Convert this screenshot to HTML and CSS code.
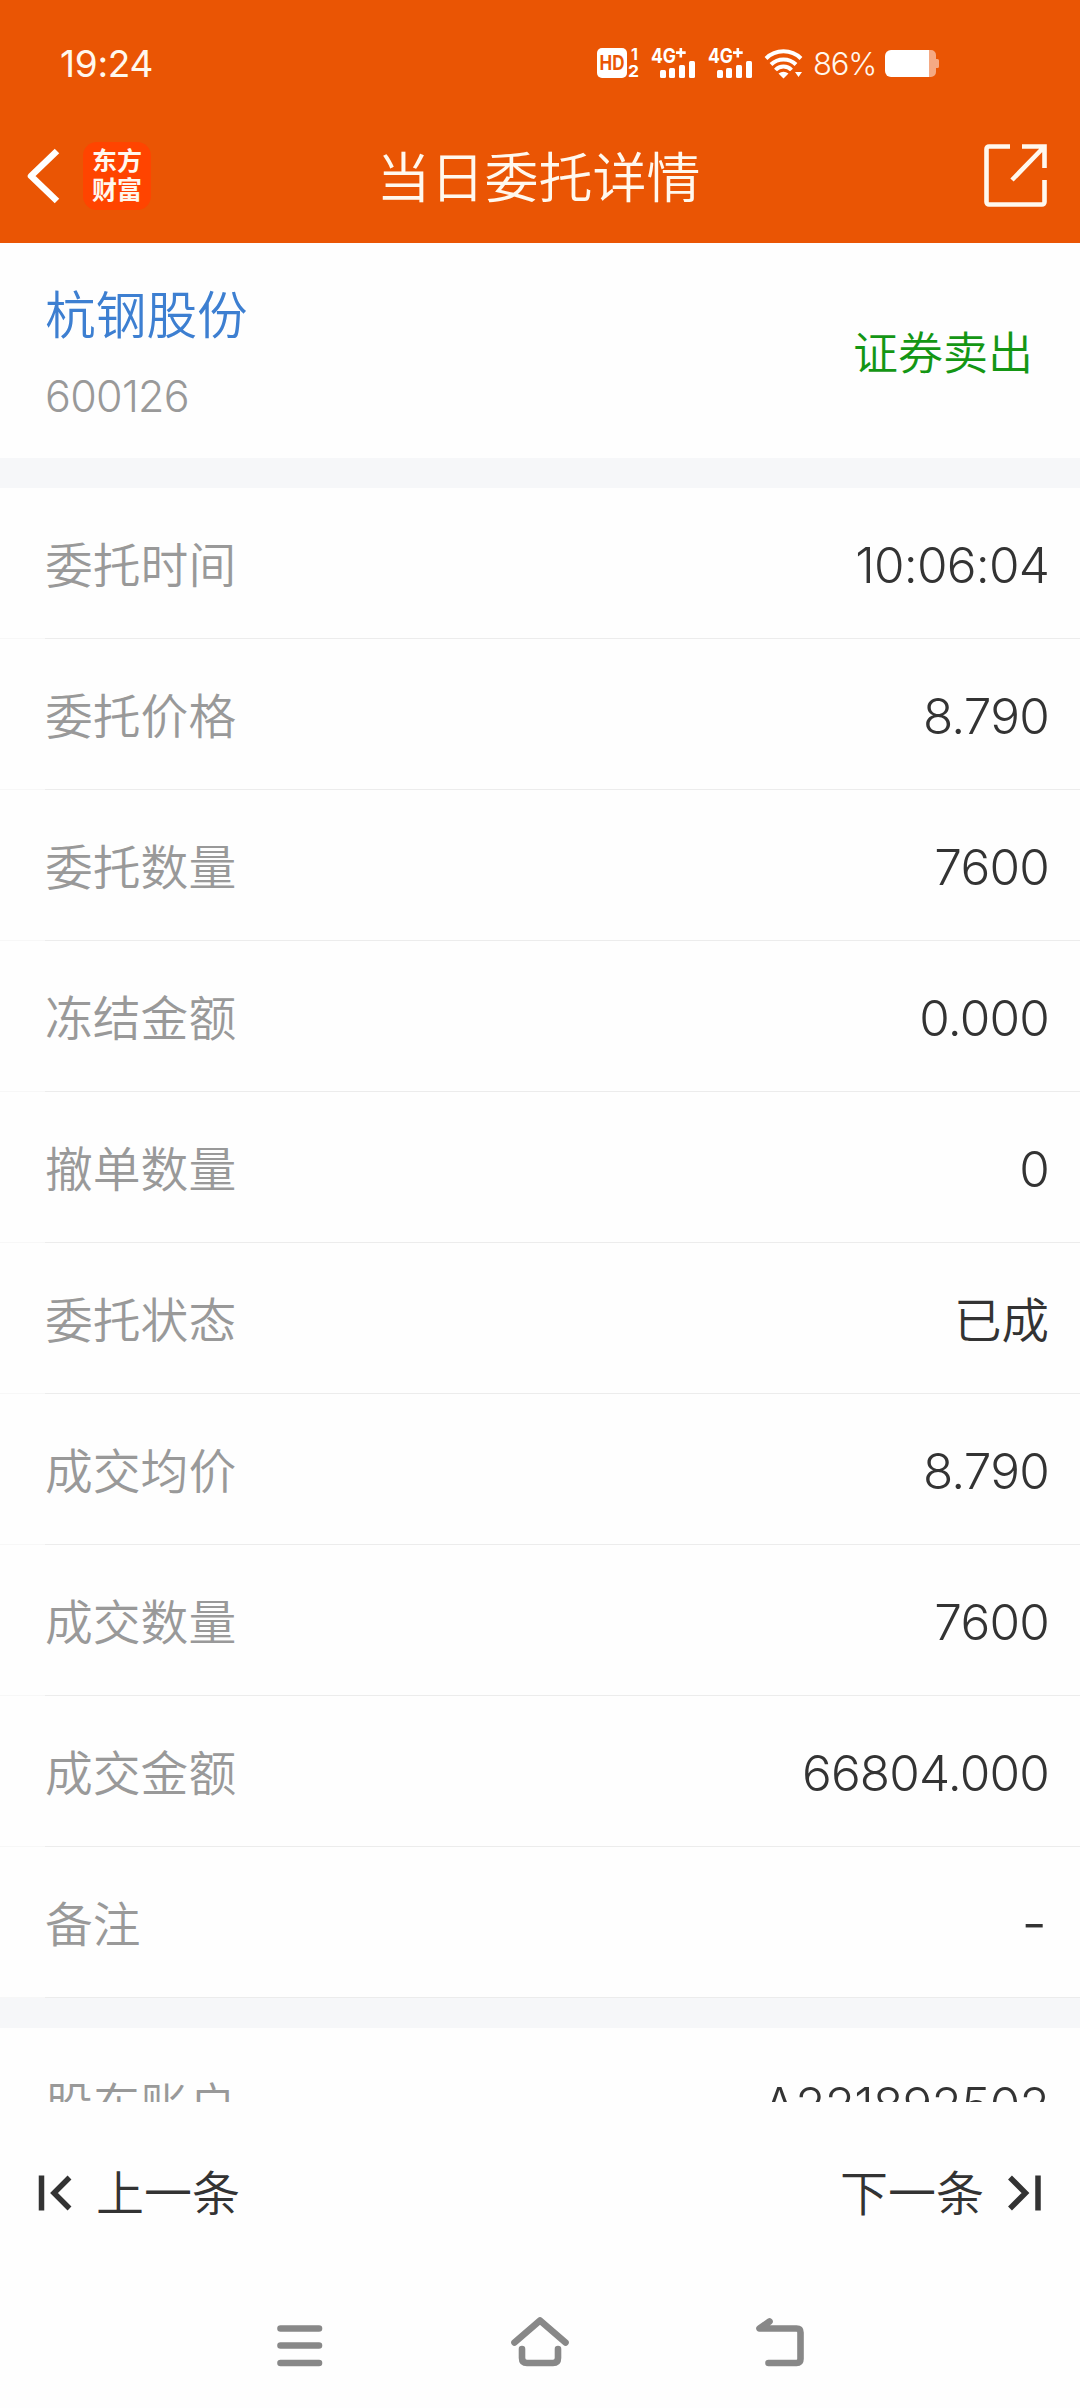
FILE: index.html
```html
<!DOCTYPE html>
<html lang="zh-CN">
<head>
    <meta charset="UTF-8">
    <meta name="viewport" content="width=device-width, initial-scale=1.0">
    <title>当日委托详情</title>
    <link rel="stylesheet" href="styles.css">
</head>
<body>

    <div class="app">
        <!-- Status bar -->
        <div class="status-bar">
            <span class="clock">19:24</span>
            <svg class="signal-icons" width="220" height="40" viewBox="0 0 220 40" fill="#fff">
                <rect x="1" y="5" width="30" height="30" rx="5"/>
                <text x="3.5" y="27" class="hd-text" textLength="25" lengthAdjust="spacingAndGlyphs">HD</text>
                <text x="35" y="17" class="sim-text">1</text>
                <text x="32" y="34" class="sim-text" textLength="11" lengthAdjust="spacingAndGlyphs">2</text>
                <g id="cell">
                    <text x="55" y="19.500" class="net-text" textLength="25" lengthAdjust="spacingAndGlyphs">4G</text>
                    <path d="M80 8.3h3.5V5h2.6v3.3h3.6v2.6h-3.6v3.6h-2.6v-3.6H80z"/>
                    <rect x="64" y="27" width="6" height="8" rx="1.5"/>
                    <rect x="73" y="25" width="6" height="10" rx="1.5"/>
                    <rect x="83" y="22" width="6" height="13" rx="1.5"/>
                    <rect x="93" y="18" width="6" height="17" rx="1.5"/>
                </g>
                <use href="#cell" x="57"/>
                <g fill="none" stroke="#fff" stroke-width="4">
                    <path d="M170 15.5a25 25 0 0 1 35 0"/>
                    <path d="M175 21.5a18 18 0 0 1 25 0"/>
                    <path d="M179.500 27a11 11 0 0 1 16 0"/>
                </g>
                <path d="M182.500 30.500q5-3.500 10 0L187.500 35.500zM199 29h7l-3.500 5z"/>
            </svg>
            <span class="battery-text">86%</span>
            <svg class="battery" width="54" height="27" viewBox="0 0 54 27">
                <path d="M43 0h3a5 5 0 0 1 5 5v4h1.500a1.500 1.500 0 0 1 1.500 1.500v6a1.500 1.500 0 0 1-1.500 1.500H51v4a5 5 0 0 1-5 5h-3z" fill="#f5a983"/>
                <path d="M6 0h38v27H6a6 6 0 0 1-6-6V6a6 6 0 0 1 6-6z" fill="#fff"/>
            </svg>
        </div>

        <!-- Title bar -->
        <div class="title-bar">
            <div class="title-left">
                <svg width="34" height="56" viewBox="0 0 34 56" fill="none" stroke="#fff" stroke-width="6.500" stroke-linejoin="round">
                    <path d="M31 3L5 28l26 25"/>
                </svg>
                <div class="logo"><span>东方</span><span>财富</span></div>
            </div>
            <h1>当日委托详情</h1>
            <svg class="share" width="64" height="64" viewBox="0 0 64 64" fill="none" stroke="#fff8ee" stroke-width="4.6">
                <path d="M26 2.500H5a2.500 2.500 0 0 0-2.500 2.500v53a2.500 2.500 0 0 0 2.500 2.500h53a2.500 2.500 0 0 0 2.500-2.500V36"/>
                <path d="M38 2.500h22.500V24M60 3L28 36"/>
            </svg>
        </div>

        <!-- Stock summary -->
        <div class="stock">
            <div>
                <div class="stock-name">杭钢股份</div>
                <div class="stock-code">600126</div>
            </div>
            <div class="side">证券卖出</div>
        </div>

        <!-- Order details -->
        <div class="detail-scroll">
            <div class="gap"></div>
            <div class="row"><span class="label">委托时间</span><span class="value">10:06:04</span></div>
            <div class="row"><span class="label">委托价格</span><span class="value">8.790</span></div>
            <div class="row"><span class="label">委托数量</span><span class="value">7600</span></div>
            <div class="row"><span class="label">冻结金额</span><span class="value">0.000</span></div>
            <div class="row"><span class="label">撤单数量</span><span class="value">0</span></div>
            <div class="row"><span class="label">委托状态</span><span class="value cjk">已成</span></div>
            <div class="row"><span class="label">成交均价</span><span class="value">8.790</span></div>
            <div class="row"><span class="label">成交数量</span><span class="value">7600</span></div>
            <div class="row"><span class="label">成交金额</span><span class="value">66804.000</span></div>
            <div class="row"><span class="label">备注</span><span class="value empty">-</span></div>
            <div class="gap"></div>
            <div class="row"><span class="label">股东账户</span><span class="value">A221892502</span></div>
        </div>

        <!-- Previous / next -->
        <div class="pager">
            <div class="pager-btn">
                <svg width="34" height="36" viewBox="0 0 34 36" fill="none" stroke="#333" stroke-width="5.500">
                    <path d="M3.500 .5v35M31.500 2.500L16 18 31.500 33.500"/>
                </svg>
                <span>上一条</span>
            </div>
            <div class="pager-btn">
                <span>下一条</span>
                <svg width="34" height="36" viewBox="0 0 34 36" fill="none" stroke="#333" stroke-width="5.500">
                    <path d="M30 .5v35M2 2.500L17.500 18 2 33.500"/>
                </svg>
            </div>
        </div>

        <!-- System navigation -->
        <div class="nav-bar">
            <svg width="46" height="50" viewBox="0 0 46 50">
                <path d="M3.500 11.500h38.500M3.500 28.500h38.500M3.500 46h38.500"/>
            </svg>
            <svg width="58" height="50" viewBox="0 0 58 50">
                <path d="M3.500 25.500L29 3.500l25.500 22M11 32v9q0 5 5 5h26q5 0 5-5v-9"/>
            </svg>
            <svg width="48" height="50" viewBox="0 0 48 50">
                <path d="M13.500 4.500L3.500 11.500h37q4 0 4 4v26.500q0 4-4 4H12.500"/>
            </svg>
        </div>
    </div>

</body>
</html>
```

FILE: styles.css
```css
/* Basic Reset */
* {
    margin: 0;
    padding: 0;
    box-sizing: border-box;
}

body {
    font-family: Inter, "Noto Sans CJK SC", sans-serif;
    font-weight: 350;
    background-color: #fefefe;
    color: #333;
}

svg {
    display: block;
    flex: none;
    overflow: visible;
}

.app {
    display: flex;
    flex-direction: column;
    width: 1080px;
    height: 2408px;
    overflow: hidden;
}

/* Status bar */
.status-bar {
    display: flex;
    align-items: center;
    height: 108px;
    padding: 18px 0 0 60px;
    background-color: #ea5504;
    color: #fff8ee;
}

.clock {
    width: 536px;
    font-size: 37px;
    font-weight: 400;
    letter-spacing: -0.3px;
}

.hd-text {
    fill: #ea5504;
    font-size: 20px;
    font-weight: 700;
}

.sim-text {
    font-size: 16px;
    font-weight: 700;
}

.net-text {
    font-size: 20px;
    font-weight: 700;
}

.battery-text {
    width: 72px;
    margin-left: -3px;
    font-size: 31px;
    font-weight: 300;
    letter-spacing: -1.2px;
}

/* Title bar */
.title-bar {
    display: grid;
    grid-template-columns: 1fr auto 1fr;
    align-items: center;
    height: 135px;
    padding: 0 32px 0 26px;
    background-color: #ea5504;
    color: #fff8ee;
}

.title-left {
    display: flex;
    align-items: center;
    gap: 23px;
}

.logo {
    display: flex;
    flex-direction: column;
    align-items: center;
    justify-content: center;
    width: 68px;
    height: 68px;
    border-radius: 14px;
    background-color: #ff4400;
    font-size: 25px;
    font-weight: 700;
    line-height: 29px;
}

.title-bar h1 {
    padding: 7px 0 0 3px;
    font-size: 54px;
    font-weight: 350;
    line-height: 60px;
}

.share {
    justify-self: end;
}

/* Stock summary */
.stock {
    display: flex;
    justify-content: space-between;
    height: 215px;
    padding: 38px 47px 0 45px;
}

.stock-name {
    color: #3d7fd1;
    font-size: 50.7px;
    line-height: 70px;
}

.stock-code {
    margin-top: 15px;
    color: #999;
    font-size: 43px;
    line-height: 60px;
    letter-spacing: -0.7px;
}

.side {
    padding-top: 41px;
    color: #149614;
    font-size: 45px;
    line-height: 64px;
}

/* Order details */
.detail-scroll {
    height: 1644px;
    overflow: hidden;
}

.gap {
    height: 30px;
    background-color: #f6f7f9;
}

.row {
    display: flex;
    align-items: center;
    justify-content: space-between;
    height: 151px;
    padding: 0 31px 0 45px;
    background: linear-gradient(to right, #f7f7f7 45px, #ececec 45px) bottom / 100% 1px no-repeat;
}

.label {
    padding-top: 4px;
    color: #999;
    font-size: 47.8px;
    line-height: 70px;
}

.value {
    padding-top: 3px;
    font-size: 49.5px;
    line-height: 70px;
    letter-spacing: -0.8px;
}

.value.cjk {
    padding-top: 4px;
    font-size: 47.5px;
    letter-spacing: 0;
}

.value.empty {
    padding: 0 3px 0 0;
    font-size: 56px;
}

/* Previous / next */
.pager {
    display: flex;
    align-items: center;
    justify-content: space-between;
    height: 181px;
    padding: 0 38px;
}

.pager-btn {
    display: flex;
    align-items: center;
    gap: 24px;
    font-size: 48px;
    line-height: 70px;
}

.pager-btn span {
    padding-top: 2px;
}

/* System navigation */
.nav-bar {
    display: flex;
    justify-content: space-between;
    padding: 34px 276px 0 277px;
}

.nav-bar svg {
    fill: none;
    stroke: #888;
    stroke-width: 6.6;
    stroke-linecap: round;
    stroke-linejoin: round;
}
```
